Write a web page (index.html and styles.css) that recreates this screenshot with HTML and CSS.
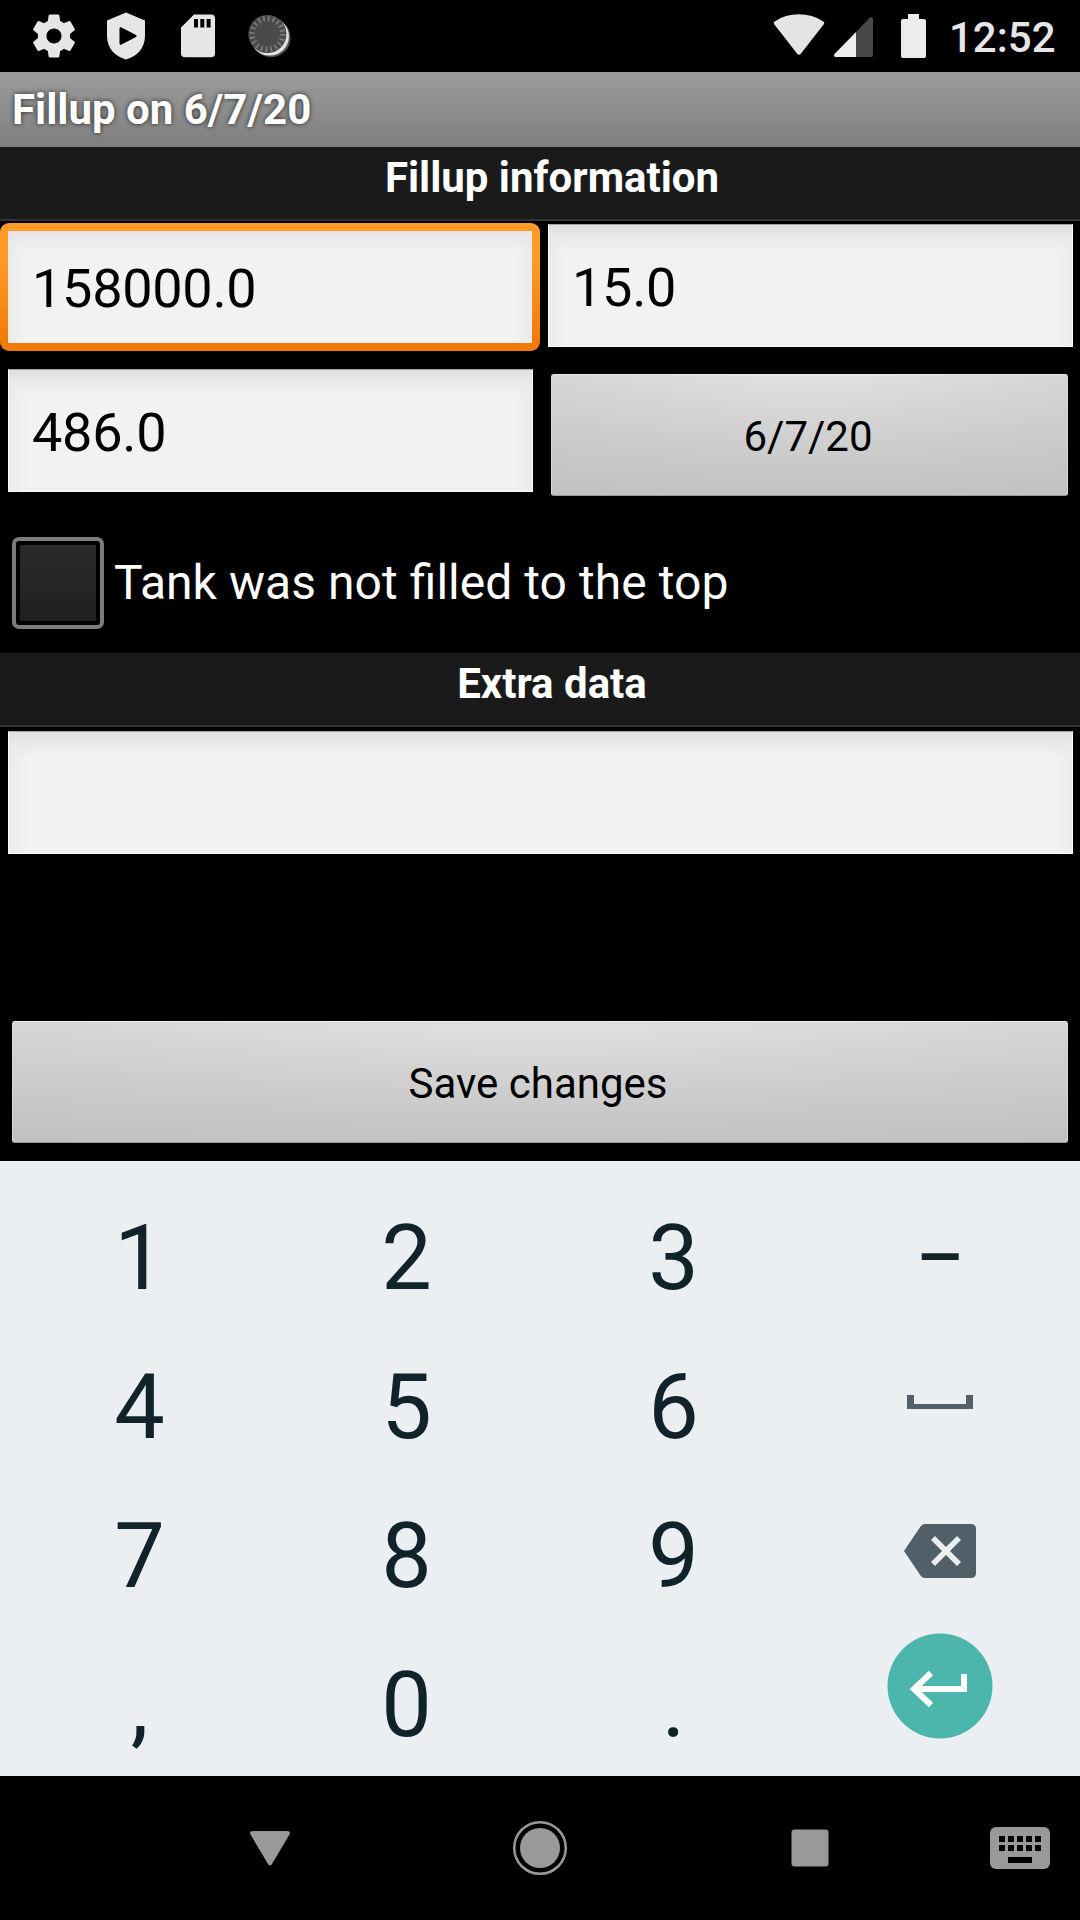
FILE: index.html
```html
<!DOCTYPE html>
<html lang="en">
<head>
<meta charset="utf-8">
<title>Fillup on 6/7/20</title>
<link rel="stylesheet" href="styles.css">
</head>
<body>
<div class="screen">
  <header class="status-bar">
    <svg class="status-icons" width="270" height="72" viewBox="0 0 270 72">
      <g fill="#e6e6e6">
        <path transform="translate(-1.8 10.2) scale(2.15)" d="M19.43 12.98c.04-.32.07-.64.07-.98s-.03-.66-.07-.98l2.11-1.65c.19-.15.24-.42.12-.64l-2-3.46c-.12-.22-.39-.3-.61-.22l-2.49 1c-.52-.4-1.08-.73-1.69-.98l-.38-2.65C14.46 2.18 14.25 2 14 2h-4c-.25 0-.46.18-.49.42l-.38 2.65c-.61.25-1.17.59-1.69.98l-2.49-1c-.23-.09-.49 0-.61.22l-2 3.46c-.13.22-.07.49.12.64l2.11 1.65c-.04.32-.07.65-.07.98s.03.66.07.98l-2.11 1.65c-.19.15-.24.42-.12.64l2 3.46c.12.22.39.3.61.22l2.49-1c.52.4 1.08.73 1.69.98l.38 2.65c.03.24.24.42.49.42h4c.25 0 .46-.18.49-.42l.38-2.65c.61-.25 1.17-.59 1.69-.98l2.49 1c.23.09.49 0 .61-.22l2-3.46c.12-.22.07-.49-.12-.64l-2.11-1.65zM12 15.5c-1.93 0-3.5-1.57-3.5-3.5s1.57-3.5 3.5-3.5 3.500 1.57 3.500 3.500-1.57 3.500-3.500 3.500z"/>
        <path fill-rule="evenodd" d="M96 12.5L115 20.500V36C115 48 107 56.500 96 59.500C85 56.500 77 48 77 36V20.500ZM89.500 28.500V43.500Q89.500 45.500 91.500 44.500L106 37Q107.500 36 106 35L91.500 27.500Q89.500 26.500 89.500 28.500Z"/>
        <path fill-rule="evenodd" d="M164 14.500H181Q185 14.500 185 18.500V53.500Q185 57.300 181 57.300H155Q151 57.300 151 53.500V27.500ZM164 19V27.500H168V19ZM170.300 19V27.500H174.300V19ZM176.600 19V27.500H180.600V19Z"/>
      </g>
      <circle cx="241" cy="37.700" r="19.500" fill="#555"/>
      <circle cx="239.600" cy="36.300" r="19.300" fill="#e4e4e4"/>
      <circle cx="237.400" cy="34" r="19.100" fill="#4a4a4a"/>
      <circle cx="237.400" cy="34" r="15.400" fill="none" stroke="#7c7c7c" stroke-width="5.500" stroke-dasharray="1.700 3.138"/>
    </svg>
    <svg class="status-signal" width="156" height="72" viewBox="0 0 156 72">
      <path d="M4 24Q3 22.500 5 21.300Q15 14.300 28.800 14.300Q42.500 14.300 53 21.300Q55 22.500 54 24L31 53.500Q29 56 27 53.500Z" fill="#e4e4e4"/>
      <path d="M86 32V57H66Q63 57 64.500 54Z" fill="#ececec"/>
      <path d="M86 32L99.500 18Q103 15.500 103 19V55Q103 57 101 57H86Z" fill="#484848"/>
      <path d="M138 14H149V19H154Q156 19 156 21V56Q156 58 154 58H133Q131 58 131 56V21Q131 19 133 19H138Z" fill="#ececec"/>
    </svg>
    <span class="clock">12:52</span>
  </header>

  <h1 class="title-bar">Fillup on 6/7/20</h1>

  <main class="form">
    <h2 class="section">Fillup information</h2>
    <div class="field-grid">
      <div class="field field-focused">158000.0</div>
      <div class="field field-right">15.0</div>
      <div class="field field-low">486.0</div>
      <div class="button button-date">6/7/20</div>
    </div>
    <div class="check-row">
      <span class="checkbox"><span class="checkbox-fill"></span></span>
      <span class="check-label">Tank was not filled to the top</span>
    </div>
    <h2 class="section">Extra data</h2>
    <div class="field field-wide"></div>
    <div class="button button-save">Save changes</div>
  </main>

  <div class="keyboard">
    <div class="key">1</div><div class="key">2</div><div class="key">3</div>
    <div class="key key-dash">–</div>
    <div class="key">4</div><div class="key">5</div><div class="key">6</div>
    <svg width="267" height="149" viewBox="0 0 267 149">
      <path d="M100 62H107V71H159V62H166V76H100Z" fill="#505f68"/>
    </svg>
    <div class="key">7</div><div class="key">8</div><div class="key">9</div>
    <svg width="267" height="149" viewBox="0 0 267 149">
      <path d="M97 69L113.500 44.500Q115.300 42 118 42H164Q169 42 169 47V91Q169 96 164 96H118Q115.300 96 113.500 93.500Z" fill="#505f68"/>
      <path d="M126 56L152 82M152 56L126 82" stroke="#eceff1" stroke-width="5.600"/>
    </svg>
    <div class="key">,</div><div class="key">0</div><div class="key">.</div>
    <svg width="267" height="145" viewBox="0 0 267 145">
      <circle cx="133" cy="55" r="52.500" fill="#4db6ac"/>
      <path d="M157 43V58H107M124 42L107 58L124 74" fill="none" stroke="#fff" stroke-width="6"/>
    </svg>
  </div>

  <nav class="nav-bar">
    <svg width="270" height="144" viewBox="135 0 270 144">
      <path d="M253 55H287Q291 55 289.500 58.500L272 88Q270 91 268 88L250.500 58.500Q249 55 253 55Z" fill="#999"/>
    </svg>
    <svg width="270" height="144" viewBox="405 0 270 144">
      <circle cx="540" cy="72" r="25.800" fill="none" stroke="#999" stroke-width="2.500"/>
      <circle cx="540" cy="72" r="20" fill="#999"/>
    </svg>
    <svg width="270" height="144" viewBox="675 0 270 144">
      <rect x="791.500" y="53.500" width="37" height="37" rx="3" fill="#999"/>
    </svg>
    <svg width="135" height="144" viewBox="945 0 135 144">
      <rect x="990" y="51" width="60" height="42" rx="6" fill="#999"/>
      <path d="M999 60h6v6h-6zM1008 60h6v6h-6zM1017 60h6v6h-6zM1026 60h6v6h-6zM1035 60h6v6h-6zM999 69h6v6h-6zM1008 69h6v6h-6zM1017 69h6v6h-6zM1026 69h6v6h-6zM1035 69h6v6h-6zM1008 81h24v6h-24z" fill="#000"/>
    </svg>
  </nav>
</div>
</body>
</html>
```

FILE: styles.css
```css
* {
  box-sizing: border-box;
}

body {
  margin: 0;
  background: #000;
  font-family: Roboto, "Liberation Sans", sans-serif;
}

svg {
  display: block;
}

.screen {
  width: 1080px;
  height: 1920px;
  display: flex;
  flex-direction: column;
  overflow: hidden;
  background: #000;
}

.status-bar {
  height: 72px;
  display: flex;
  align-items: center;
  padding: 0 24px 0 30px;
  flex: none;
}

.status-signal {
  margin-left: auto;
}

.clock {
  width: 107px;
  margin-left: 23px;
  padding-top: 3px;
  color: #e6e6e6;
  font-size: 42px;
  font-weight: 500;
  white-space: nowrap;
}

.title-bar {
  flex: none;
  height: 75px;
  margin: 0;
  padding-left: 12px;
  background: linear-gradient(#9c9c9c, #7f7f7f);
  color: #fff;
  font-size: 42px;
  font-weight: 700;
  line-height: 75px;
  text-shadow: 0 0 5px rgba(0, 0, 0, 0.75);
}

.form {
  height: 1014px;
  flex: none;
}

.section {
  height: 74px;
  margin: 0;
  padding-left: 24px;
  border-bottom: 2px solid #333;
  background: #1a1a1a;
  color: #fff;
  font-size: 42px;
  font-weight: 700;
  line-height: 62px;
  text-align: center;
}

.field-grid {
  display: grid;
  grid-template-columns: 540px 540px;
  grid-template-rows: 146px 146px;
  padding-top: 2px;
}

.field {
  height: 123px;
  padding-left: 24px;
  border: 1px solid #fafafa;
  border-top-color: #a5a5a5;
  background:
    linear-gradient(#dfdfdf, #e9e9e9 12px, rgba(242, 242, 242, 0) 26px),
    linear-gradient(90deg, #ebebeb, #f2f2f2 18px calc(100% - 18px), #ebebeb);
  color: #000;
  font-size: 54px;
  letter-spacing: -0.28px;
  line-height: 125px;
}

.field-focused {
  width: 540px;
  height: 128px;
  padding-left: 24px;
  border: 8px solid transparent;
  border-radius: 9px;
  background:
    linear-gradient(#e5e5e5, rgba(242, 242, 242, 0) 20px) padding-box,
    linear-gradient(90deg, #eaeaea, #f2f2f2 18px calc(100% - 18px), #eaeaea) padding-box,
    linear-gradient(#fd9b26 30%, #f27a07 92%) border-box;
  line-height: 115px;
}

.field-right {
  width: 525px;
  margin: 1px 0 0 8px;
  padding-left: 23px;
  line-height: 126px;
}

.field-low {
  width: 525px;
  margin-left: 8px;
  padding-left: 23px;
}

.button {
  height: 122px;
  border: 1px solid #d8d8d8;
  border-top-color: #ededed;
  border-bottom-color: #9a9a9a;
  border-radius: 3px;
  background:
    linear-gradient(90deg, rgba(190, 190, 190, 0.3), rgba(190, 190, 190, 0) 45% 55%, rgba(190, 190, 190, 0.3)),
    linear-gradient(#e0e0e0, #c6c6c6 85%, #c2c2c2);
  color: #000;
  font-size: 42px;
  line-height: 124px;
  text-align: center;
}

.button-date {
  width: 517px;
  margin: 5px 0 0 11px;
  padding-right: 3px;
}

.check-row {
  display: flex;
  align-items: center;
  height: 138px;
  padding: 0 0 3px 12px;
}

.checkbox {
  width: 92px;
  height: 92px;
  padding: 4px;
  border: 4px solid #7c7c7c;
  border-radius: 7px;
}

.checkbox-fill {
  display: block;
  height: 76px;
  background: linear-gradient(#2a2a2a, #202020);
}

.check-label {
  margin-left: 10px;
  padding-bottom: 1px;
  color: #fff;
  font-size: 48px;
  word-spacing: 0.2px;
}

.field-wide {
  width: 1065px;
  margin: 4px 0 0 8px;
}

.button-save {
  width: 1056px;
  margin: 167px 0 0 12px;
  padding-right: 4px;
}

.keyboard {
  flex: none;
  display: grid;
  grid-template-columns: repeat(4, 267px);
  grid-template-rows: 149px 149px 149px 145px;
  height: 615px;
  padding: 23px 6px 0;
  background: #eceff1;
}

.key {
  color: #10232b;
  font-size: 90px;
  line-height: 149px;
  text-align: center;
}

.key-dash {
  transform: scaleX(0.84);
}

.nav-bar {
  display: flex;
  height: 144px;
  padding-left: 135px;
}
```
